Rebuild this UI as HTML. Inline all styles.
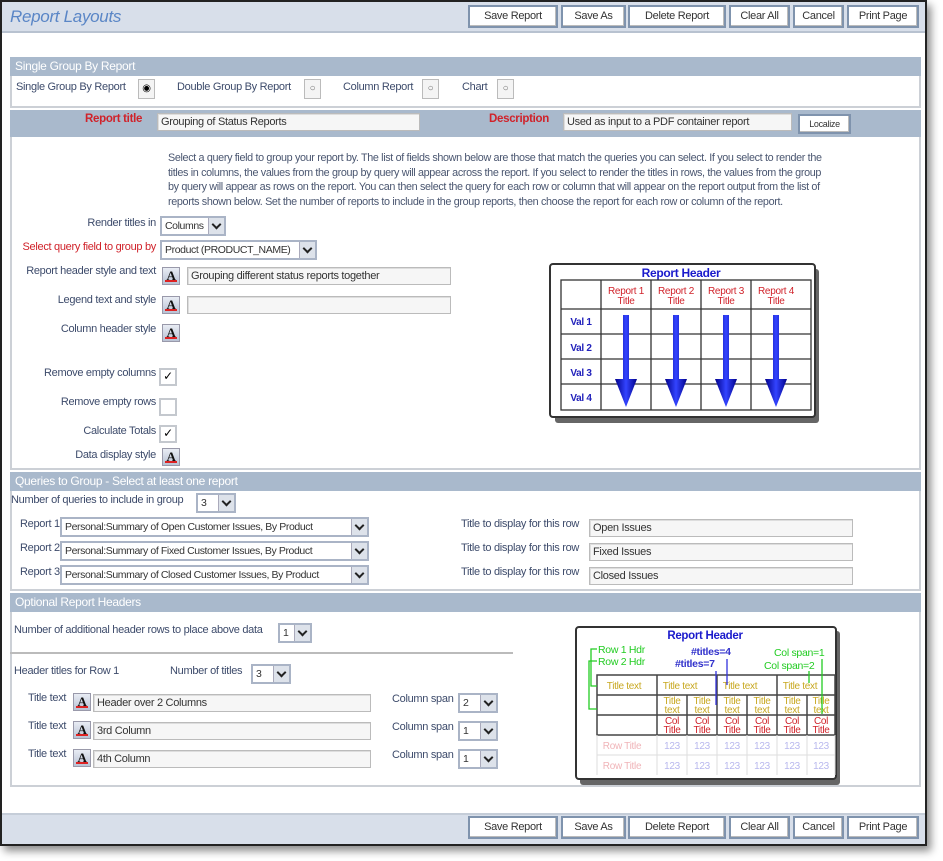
<!DOCTYPE html>
<html><head><meta charset="utf-8"><style>
*{box-sizing:border-box;margin:0;padding:0}
body{width:943px;height:861px;background:#fff;position:relative;overflow:hidden;font-family:"Liberation Sans",Arial,sans-serif;font-size:11px;color:#3d4b6b;letter-spacing:-0.3px}
.a{position:absolute;white-space:nowrap}
#win{position:absolute;left:0;top:0;width:927px;height:846px;border:2px solid #222;background:#fff;box-shadow:4px 5px 8px rgba(0,0,0,.45)}
.bar{position:absolute;left:0;width:923px;height:31px;background:#d8dfea}
.btn{position:absolute;height:23px;border:2px solid #7f93ad;background:#fff;font-size:11px;color:#333;text-align:center;line-height:19px;box-shadow:inset -1px -1px 0 #bbb}
.hd{position:absolute;left:8px;width:911px;height:19px;background:#a9b9cc;color:#fff;font-size:12px;padding-left:5px;line-height:19px}
.pn{position:absolute;left:8px;width:911px;border:2px solid #ccd0d6;border-top:none;background:#fff}
.lab{position:absolute;text-align:right;width:150px;left:4px}
.red{color:#d0222a}
.in{position:absolute;height:18px;border:1px solid #bbb;background:#f6f6f6;color:#333;padding-left:3px;line-height:16px;box-shadow:inset 1px 1px 0 #ddd;overflow:hidden}
.sel{position:absolute;height:20px;border:2px solid #aab4c6;background:#fff;color:#333;padding-left:3px;line-height:16px;font-size:10.5px;letter-spacing:-0.4px;overflow:hidden}
.sel b{position:absolute;right:0;top:0;width:16px;height:16px;background:#dde2ea;border-left:1px solid #aab}
.sel b:after{content:"";position:absolute;left:4px;top:3px;width:5px;height:5px;border-right:2px solid #222;border-bottom:2px solid #222;transform:rotate(45deg)}
.ic{position:absolute;width:18px;height:18px;background:linear-gradient(#e8ecf4,#b8c2d4);border:1px solid #99a;font:bold 13px "Liberation Serif",serif;color:#111;text-align:center;line-height:15px}
.ic:after{content:"";position:absolute;left:2px;right:2px;bottom:2px;height:2px;background:#d22}
.cb{position:absolute;width:18px;height:18px;border:2px solid #c4c8ce;background:#fff;font-size:12px;line-height:13px;text-align:center;color:#000}
.rd{position:absolute;width:17px;height:20px;border:1px solid #bbb;background:#f4f4f4;font-size:10px;text-align:center;line-height:18px;color:#666}
</style></head><body>
<div id="win">
<div class="bar" style="top:0;border-bottom:2px solid #b8c2d0"></div>
<div class="a" style="left:8px;top:5px;font-size:17px;font-style:italic;color:#5a86c6">Report Layouts</div>
<div class="btn" style="left:466px;top:3px;width:90px">Save Report</div>
<div class="btn" style="left:559px;top:3px;width:65px">Save As</div>
<div class="btn" style="left:626px;top:3px;width:98px">Delete Report</div>
<div class="btn" style="left:727px;top:3px;width:61px">Clear All</div>
<div class="btn" style="left:791px;top:3px;width:51px">Cancel</div>
<div class="btn" style="left:845px;top:3px;width:72px">Print Page</div>

<div class="hd" style="top:55px">Single Group By Report</div>
<div class="pn" style="top:74px;height:32px"></div>
<div class="a" style="left:14px;top:79px">Single Group By Report</div><div class="rd" style="left:136px;top:77px;color:#000">◉</div>
<div class="a" style="left:175px;top:79px">Double Group By Report</div><div class="rd" style="left:302px;top:77px">○</div>
<div class="a" style="left:341px;top:79px">Column Report</div><div class="rd" style="left:420px;top:77px">○</div>
<div class="a" style="left:460px;top:79px">Chart</div><div class="rd" style="left:495px;top:77px">○</div>

<div class="hd" style="top:108px;height:27px"></div>
<div class="a red" style="left:83px;top:111px;font-weight:bold;font-size:11.5px">Report title</div>
<div class="in" style="left:155px;top:111px;width:263px">Grouping of Status Reports</div>
<div class="a red" style="left:487px;top:111px;font-weight:bold;font-size:11.5px">Description</div>
<div class="in" style="left:561px;top:111px;width:229px">Used as input to a PDF container report</div>
<div class="btn" style="left:796px;top:112px;width:53px;height:20px;font-size:9px;line-height:16px">Localize</div>
<div class="pn" style="top:135px;height:333px"></div>
<div class="a" style="left:166px;top:149px;line-height:14.7px;font-size:10.8px;letter-spacing:-0.35px;color:#4a5670">Select a query field to group your report by. The list of fields shown below are those that match the queries you can select. If you select to render the<br>titles in columns, the values from the group by query will appear across the report. If you select to render the titles in rows, the values from the group<br>by query will appear as rows on the report. You can then select the query for each row or column that will appear on the report output from the list of<br>reports shown below. Set the number of reports to include in the group reports, then choose the report for each row or column of the report.</div>
<div class="lab a" style="top:215px">Render titles in</div>
<div class="sel" style="left:158px;top:214px;width:66px">Columns<b></b></div>
<div class="lab a red" style="top:239px">Select query field to group by</div>
<div class="sel" style="left:158px;top:238px;width:157px">Product (PRODUCT_NAME)<b></b></div>
<div class="lab a" style="top:263px">Report header style and text</div>
<div class="ic" style="left:160px;top:265px">A</div>
<div class="in" style="left:185px;top:265px;width:264px">Grouping different status reports together</div>
<div class="lab a" style="top:292px">Legend text and style</div>
<div class="ic" style="left:160px;top:294px">A</div>
<div class="in" style="left:185px;top:294px;width:264px"></div>
<div class="lab a" style="top:321px">Column header style</div>
<div class="ic" style="left:160px;top:322px">A</div>
<div class="lab a" style="top:365px">Remove empty columns</div>
<div class="cb" style="left:157px;top:366px">✓</div>
<div class="lab a" style="top:394px">Remove empty rows</div>
<div class="cb" style="left:157px;top:396px"></div>
<div class="lab a" style="top:423px">Calculate Totals</div>
<div class="cb" style="left:157px;top:423px">✓</div>
<div class="lab a" style="top:447px">Data display style</div>
<div class="ic" style="left:160px;top:446px">A</div>

<svg class="a" style="left:547px;top:261px" width="272" height="162" viewBox="0 0 272 162">
<defs><linearGradient id="g" x1="0" x2="1"><stop offset="0" stop-color="#00008a"/><stop offset=".5" stop-color="#3344ff"/><stop offset="1" stop-color="#00008a"/></linearGradient></defs>
<rect x="6" y="6" width="264" height="154" rx="3" fill="#666"/>
<rect x="1" y="1" width="265" height="153" rx="3" fill="#fff" stroke="#333" stroke-width="2"/>
<text x="132" y="14" text-anchor="middle" font-family="Liberation Sans" font-weight="bold" font-size="12" fill="#1a1acc">Report Header</text>
<g stroke="#333" stroke-width="1.3" fill="none"><rect x="12" y="17" width="250" height="130"/><line x1="12" y1="46" x2="262" y2="46"/><line x1="12" y1="71" x2="262" y2="71"/><line x1="12" y1="96" x2="262" y2="96"/><line x1="12" y1="121" x2="262" y2="121"/><line x1="52" y1="17" x2="52" y2="147"/><line x1="102" y1="17" x2="102" y2="147"/><line x1="152" y1="17" x2="152" y2="147"/><line x1="202" y1="17" x2="202" y2="147"/></g>
<g font-family="Liberation Sans" font-size="10" fill="#d0222a" text-anchor="middle"><text x="77" y="31">Report 1</text><text x="77" y="41">Title</text><text x="127" y="31">Report 2</text><text x="127" y="41">Title</text><text x="177" y="31">Report 3</text><text x="177" y="41">Title</text><text x="227" y="31">Report 4</text><text x="227" y="41">Title</text></g>
<g font-family="Liberation Sans" font-weight="bold" font-size="10" fill="#2222bb" text-anchor="middle"><text x="32" y="62">Val 1</text><text x="32" y="88">Val 2</text><text x="32" y="113">Val 3</text><text x="32" y="138">Val 4</text></g>
<g fill="url(#g)"><path d="M74 52h6v64h8l-11 28-11-28h8z"/><path d="M124 52h6v64h8l-11 28-11-28h8z"/><path d="M174 52h6v64h8l-11 28-11-28h8z"/><path d="M224 52h6v64h8l-11 28-11-28h8z"/></g>
</svg>

<div class="hd" style="top:470px">Queries to Group - Select at least one report</div>
<div class="pn" style="top:489px;height:100px"></div>
<div class="a" style="left:9px;top:492px">Number of queries to include in group</div>
<div class="sel" style="left:194px;top:491px;width:40px">3<b></b></div>
<div class="a" style="left:18px;top:516px">Report 1</div><div class="sel" style="left:58px;top:515px;width:309px">Personal:Summary of Open Customer Issues, By Product<b></b></div>
<div class="a" style="left:18px;top:540px">Report 2</div><div class="sel" style="left:58px;top:539px;width:309px">Personal:Summary of Fixed Customer Issues, By Product<b></b></div>
<div class="a" style="left:18px;top:564px">Report 3</div><div class="sel" style="left:58px;top:563px;width:309px">Personal:Summary of Closed Customer Issues, By Product<b></b></div>
<div class="a" style="left:459px;top:516px">Title to display for this row</div><div class="in" style="left:587px;top:517px;width:264px">Open Issues</div>
<div class="a" style="left:459px;top:540px">Title to display for this row</div><div class="in" style="left:587px;top:541px;width:264px">Fixed Issues</div>
<div class="a" style="left:459px;top:564px">Title to display for this row</div><div class="in" style="left:587px;top:565px;width:264px">Closed Issues</div>

<div class="hd" style="top:591px">Optional Report Headers</div>
<div class="pn" style="top:610px;height:175px"></div>
<div class="a" style="left:12px;top:622px">Number of additional header rows to place above data</div>
<div class="sel" style="left:276px;top:621px;width:34px">1<b></b></div>
<div class="a" style="left:8px;top:650px;width:503px;height:2px;background:#bbb"></div>
<div class="a" style="left:12px;top:663px">Header titles for Row 1</div>
<div class="a" style="left:168px;top:663px">Number of titles</div>
<div class="sel" style="left:249px;top:662px;width:40px">3<b></b></div>
<div class="a" style="left:26px;top:690px">Title text</div><div class="ic" style="left:71px;top:691px">A</div><div class="in" style="left:91px;top:692px;width:278px">Header over 2 Columns</div>
<div class="a" style="left:26px;top:718px">Title text</div><div class="ic" style="left:71px;top:719px">A</div><div class="in" style="left:91px;top:720px;width:278px">3rd Column</div>
<div class="a" style="left:26px;top:746px">Title text</div><div class="ic" style="left:71px;top:747px">A</div><div class="in" style="left:91px;top:748px;width:278px">4th Column</div>
<div class="a" style="left:390px;top:691px">Column span</div><div class="sel" style="left:456px;top:691px;width:40px">2<b></b></div>
<div class="a" style="left:390px;top:719px">Column span</div><div class="sel" style="left:456px;top:719px;width:40px">1<b></b></div>
<div class="a" style="left:390px;top:747px">Column span</div><div class="sel" style="left:456px;top:747px;width:40px">1<b></b></div>

<svg class="a" style="left:572px;top:623px" width="268" height="162" viewBox="0 0 268 162">
<rect x="6" y="6" width="260" height="154" rx="3" fill="#666"/>
<rect x="2" y="2" width="260" height="152" rx="3" fill="#fff" stroke="#333" stroke-width="2"/>
<text x="131" y="14" text-anchor="middle" font-family="Liberation Sans" font-weight="bold" font-size="11.5" fill="#1a1acc">Report Header</text>
<g stroke="#444" stroke-width="1.5" fill="none"><rect x="23" y="50" width="238" height="60"/><line x1="23" y1="70" x2="261" y2="70"/><line x1="23" y1="90" x2="261" y2="90"/><line x1="83" y1="50" x2="83" y2="110"/><line x1="143" y1="50" x2="143" y2="110"/><line x1="203" y1="50" x2="203" y2="110"/><line x1="113" y1="70" x2="113" y2="110"/><line x1="173" y1="70" x2="173" y2="110"/><line x1="233" y1="70" x2="233" y2="110"/></g>
<g stroke="#ddd"><line x1="83" y1="110" x2="83" y2="150"/><line x1="113" y1="110" x2="113" y2="150"/><line x1="143" y1="110" x2="143" y2="150"/><line x1="173" y1="110" x2="173" y2="150"/><line x1="203" y1="110" x2="203" y2="150"/><line x1="233" y1="110" x2="233" y2="150"/><line x1="23" y1="130" x2="261" y2="130"/><line x1="23" y1="110" x2="23" y2="150"/><line x1="261" y1="110" x2="261" y2="150"/></g>
<g font-family="Liberation Sans" font-size="10" fill="#c8a820" text-anchor="middle"><text x="50" y="64">Title text</text><text x="106" y="64">Title text</text><text x="166" y="64">Title text</text><text x="226" y="64">Title text</text>
<text x="98" y="79">Title</text><text x="98" y="88">text</text><text x="128" y="79">Title</text><text x="128" y="88">text</text><text x="158" y="79">Title</text><text x="158" y="88">text</text><text x="188" y="79">Title</text><text x="188" y="88">text</text><text x="218" y="79">Title</text><text x="218" y="88">text</text><text x="247" y="79">Title</text><text x="247" y="88">text</text></g>
<g font-family="Liberation Sans" font-size="10" fill="#d0222a" text-anchor="middle"><text x="98" y="99">Col</text><text x="98" y="108">Title</text><text x="128" y="99">Col</text><text x="128" y="108">Title</text><text x="158" y="99">Col</text><text x="158" y="108">Title</text><text x="188" y="99">Col</text><text x="188" y="108">Title</text><text x="218" y="99">Col</text><text x="218" y="108">Title</text><text x="247" y="99">Col</text><text x="247" y="108">Title</text></g>
<g font-family="Liberation Sans" font-size="10" fill="#f0b4b8" text-anchor="middle"><text x="48" y="124">Row Title</text><text x="48" y="144">Row Title</text></g>
<g font-family="Liberation Sans" font-size="10" fill="#b8b8ee" text-anchor="middle"><text x="98" y="124">123</text><text x="128" y="124">123</text><text x="158" y="124">123</text><text x="188" y="124">123</text><text x="218" y="124">123</text><text x="247" y="124">123</text><text x="98" y="144">123</text><text x="128" y="144">123</text><text x="158" y="144">123</text><text x="188" y="144">123</text><text x="218" y="144">123</text><text x="247" y="144">123</text></g>
<g font-family="Liberation Sans" font-size="10.5" fill="#22cc22"><text x="24" y="28">Row 1 Hdr</text><text x="24" y="40">Row 2 Hdr</text><text x="200" y="31">Col span=1</text><text x="190" y="44">Col span=2</text></g>
<g font-family="Liberation Sans" font-weight="bold" font-size="10.5" fill="#3333cc"><text x="117" y="30">#titles=4</text><text x="101" y="42">#titles=7</text></g>
<g stroke="#22cc22" fill="none" stroke-width="1.3"><path d="M23 24h-6v37h6"/><path d="M23 36h-8v48h8"/><path d="M248 34v55"/><path d="M235 46v12"/></g>
<g stroke="#3333dd" stroke-width="1.3"><line x1="153" y1="34" x2="153" y2="60"/><line x1="142" y1="46" x2="142" y2="80"/></g>
</svg>

<div class="bar" style="top:811px;height:31px;border-top:2px solid #c5cdd8"></div>
<div class="btn" style="left:466px;top:814px;width:90px">Save Report</div>
<div class="btn" style="left:559px;top:814px;width:65px">Save As</div>
<div class="btn" style="left:626px;top:814px;width:98px">Delete Report</div>
<div class="btn" style="left:727px;top:814px;width:61px">Clear All</div>
<div class="btn" style="left:791px;top:814px;width:51px">Cancel</div>
<div class="btn" style="left:845px;top:814px;width:72px">Print Page</div>
</div>
</body></html>
